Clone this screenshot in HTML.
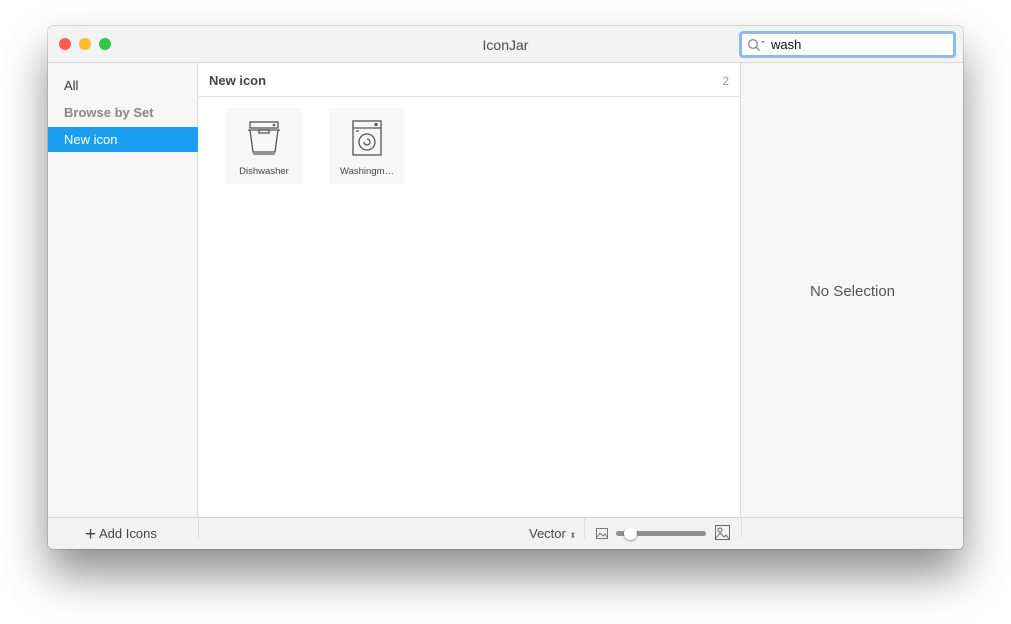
<!DOCTYPE html>
<html><head><meta charset="utf-8"><style>
*{margin:0;padding:0;box-sizing:border-box}
body{width:1011px;height:624px;background:#fff;font-family:"Liberation Sans",sans-serif;position:relative;overflow:hidden}
.win{position:absolute;left:48px;top:26px;width:915px;height:523px;background:#f6f6f6;border-radius:5px;box-shadow:0 25px 45px rgba(0,0,0,.45),0 0 0 1px rgba(0,0,0,.12);overflow:hidden}
.title{position:absolute;left:0;top:0;width:915px;height:37px;background:#f3f3f3;border-bottom:1px solid #d6d6d6}
.dot{position:absolute;top:12px;width:12px;height:12px;border-radius:50%}
.title .t{position:absolute;left:0;width:915px;top:11px;text-align:center;font-size:14px;color:#4a4a4a}
.search{position:absolute;left:691px;top:5px;width:217px;height:27px;border:3px solid #8ebaf0;border-radius:4px;background:#fff;font-size:13px;color:#111;padding:3px 0 0 29px}
.side{position:absolute;left:0;top:37px;width:150px;height:454px;background:#f6f6f6;border-right:1px solid #dcdcdc}
.side .l{position:absolute;left:16px;font-size:13px}
.sel{position:absolute;left:0;top:64px;width:150px;height:25px;background:#1a9ff0}
.center{position:absolute;left:151px;top:37px;width:542px;height:454px;background:#fff;border-right:1px solid #dcdcdc}
.hdr{height:34px;border-bottom:1px solid #dedede;position:relative}
.tile{position:absolute;top:45px;width:76px;height:76px;background:#f7f7f7;text-align:center}
.tile span{position:absolute;left:0;width:76px;top:58px;font-size:9.5px;color:#444}
.right{position:absolute;left:694px;top:37px;width:221px;height:454px;background:#f6f6f6}
.bot{position:absolute;left:0;top:491px;width:915px;height:32px;background:#f2f2f2;border-top:1px solid #d4d4d4}
</style></head><body>
<div class="win">
 <div class="title">
  <div class="dot" style="left:11px;background:#fc5e57"></div>
  <div class="dot" style="left:31px;background:#fdbc2e"></div>
  <div class="dot" style="left:51px;background:#33c748"></div>
  <div class="t">IconJar</div>
  <div class="search">wash
   <svg style="position:absolute;left:5px;top:4px" width="20" height="14" viewBox="0 0 20 14"><circle cx="6" cy="6" r="4.3" fill="none" stroke="#888" stroke-width="1.3"/><path d="M9 9l3.5 3.5" stroke="#888" stroke-width="1.4"/><path d="M14 3h4l-2 2z" fill="#888"/></svg>
  </div>
 </div>
 <div class="side">
  <div class="l" style="top:15px;color:#333">All</div>
  <div class="l" style="top:42px;color:#888;font-weight:bold">Browse by Set</div>
  <div class="sel"></div>
  <div class="l" style="top:69px;color:#fff">New icon</div>
 </div>
 <div class="center">
  <div class="hdr"><span style="position:absolute;left:10px;top:10px;font-size:13px;font-weight:bold;color:#444">New icon</span><span style="position:absolute;right:11px;top:11px;font-size:12px;color:#999">2</span></div>
  <div class="tile" style="left:27px">
   <svg style="position:absolute;left:21px;top:12px" width="34" height="36" viewBox="0 0 34 36" fill="none" stroke="#555" stroke-width="1.3"><rect x="3" y="2" width="28" height="6"/><path d="M1 10h32M3 10l3 22h22l3-22"/><rect x="12" y="10" width="10" height="3"/><path d="M6 34h22"/><circle cx="27" cy="5" r=".6" fill="#555"/></svg>
   <span>Dishwasher</span>
  </div>
  <div class="tile" style="left:130px">
   <svg style="position:absolute;left:22px;top:11px" width="32" height="38" viewBox="0 0 32 38" fill="none" stroke="#555" stroke-width="1.3"><rect x="2" y="2" width="28" height="34"/><path d="M2 9h28"/><circle cx="25" cy="5.5" r="1" fill="#555"/><path d="M5 12h3" /><circle cx="16" cy="23" r="8"/><path d="M13 23a3 3 0 1 0 3-3"/></svg>
   <span>Washingm…</span>
  </div>
 </div>
 <div class="right"><div style="position:absolute;left:0;width:221px;top:220px;text-align:center;font-size:15px;color:#555">No Selection</div></div>
 <div class="bot">
  <div style="position:absolute;left:150px;top:0;width:1px;height:20px;background:#dcdcdc"></div>
  <div style="position:absolute;left:536px;top:0;width:1px;height:20px;background:#dcdcdc"></div>
  <div style="position:absolute;left:693px;top:0;width:1px;height:20px;background:#dcdcdc"></div>
  <div style="position:absolute;left:37px;top:8px;font-size:13px;color:#444"><span style="font-size:19px;position:relative;top:2px;line-height:10px">+</span> Add Icons</div>
  <div style="position:absolute;left:481px;top:8px;font-size:13px;color:#444">Vector <span style="font-size:8px;color:#777">⬍</span></div>
  <svg style="position:absolute;left:548px;top:10px" width="12" height="11" viewBox="0 0 12 11" fill="none" stroke="#777"><rect x=".5" y=".5" width="11" height="10"/><path d="M1 9l3-4 3 3 2-2 2 3"/></svg>
  <div style="position:absolute;left:568px;top:13px;width:90px;height:5px;background:#8e8e8e;border-radius:3px"></div>
  <div style="position:absolute;left:576px;top:9px;width:13px;height:13px;background:#fff;border-radius:50%;box-shadow:0 1px 2px rgba(0,0,0,.4)"></div>
  <svg style="position:absolute;left:667px;top:7px" width="15" height="15" viewBox="0 0 15 15" fill="none" stroke="#666"><rect x=".5" y=".5" width="14" height="14"/><circle cx="5" cy="5" r="2"/><path d="M1 13l4-5 4 4 2-2 3 4"/></svg>
 </div>
</div>
</body></html>
